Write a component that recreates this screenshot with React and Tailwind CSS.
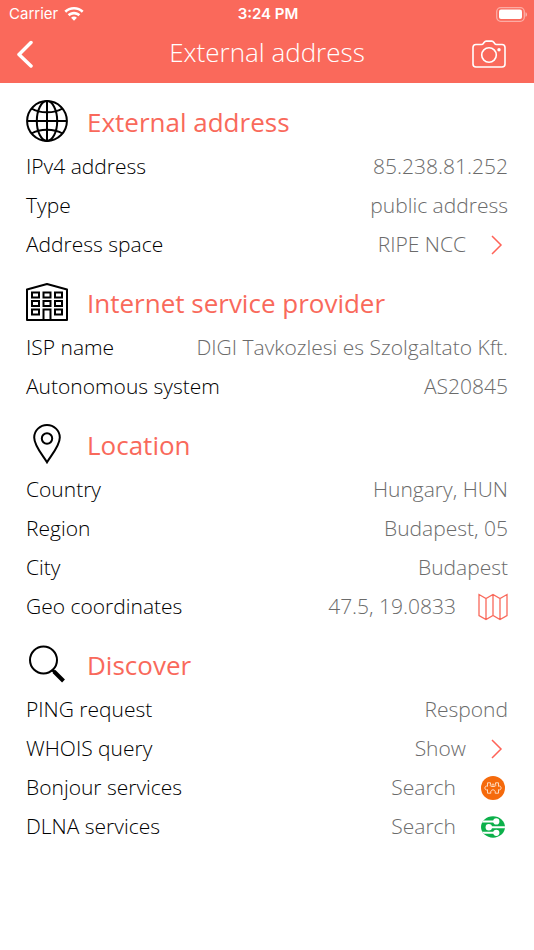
function StatusBar() {
    return (
        <div className="grid grid-cols-3 items-center h-7 pl-[9px] pr-[7px] font-['Inter','Liberation_Sans',sans-serif] text-[15px]">
            <div className="flex items-center gap-1.5">
                <span>Carrier</span>
                <svg className="w-5 h-[14px]" viewBox="0 0 20 14" fill="currentColor">
                    <path d="M10 0C6.300 0 2.900 1.400.400 3.800l1.800 1.900C4.300 3.700 7 2.600 10 2.600s5.700 1.100 7.800 3.100l1.800-1.900C17.100 1.400 13.700 0 10 0z" />
                    <path d="M10 4.800c-2.400 0-4.600.9-6.300 2.500l1.900 1.900C6.800 8.100 8.300 7.400 10 7.400s3.200.7 4.400 1.800l1.900-1.900C14.600 5.700 12.400 4.800 10 4.800z" />
                    <path d="M10 9.600c-1.100 0-2.100.4-2.900 1.100L10 13.800l2.900-3.100c-.8-.7-1.800-1.100-2.900-1.100z" />
                </svg>
            </div>
            <div className="text-center font-semibold whitespace-nowrap">3:24 PM</div>
            <svg className="w-8 h-[15px] justify-self-end" viewBox="0 0 32 15" fill="none">
                <rect x="1.700" y="0.700" width="27.600" height="13.600" rx="4" stroke="white" strokeOpacity="0.450" strokeWidth="1.300" />
                <rect x="4" y="2.500" width="23" height="9.500" rx="2" fill="white" />
                <path d="M30.500 5.200c1 .4 1.500 1.200 1.500 2.300s-.5 1.900-1.500 2.300z" fill="white" fillOpacity="0.500" />
            </svg>
        </div>
    );
}

function GlobeIcon() {
    return (
        <svg className="w-[42px] h-[42px]" viewBox="0 0 42 42" fill="none" stroke="black" strokeWidth="2">
            <circle cx="21" cy="21" r="19.900" />
            <ellipse cx="21" cy="21" rx="10.200" ry="19.900" />
            <path d="M21 1v40M1 21h40" />
            <path d="M5.500 8.500C9.500 11 15 12.300 21 12.300S32.500 11 36.500 8.500M5.500 33.500C9.500 31 15 29.700 21 29.700s11.500 1.300 15.500 3.800" />
        </svg>
    );
}

function BuildingIcon() {
    return (
        <svg className="w-[42px] h-[38px]" viewBox="0 0 42 38" fill="none" stroke="black" strokeWidth="2">
            <path d="M1 37V6.500L21 1l20 5.500V37z" strokeLinejoin="round" />
            <path d="M6 9.500h7v5H6zM17.500 9.500h7v5h-7zM29 9.500h7v5h-7z" />
            <path d="M6 18h7v5H6zM17.500 18h7v5h-7zM29 18h7v5h-7z" />
            <path d="M6 26.500h7v5H6zM29 26.500h7v5h-7zM17.500 37V26.500h7V37" />
        </svg>
    );
}

function PinIcon() {
    return (
        <svg className="w-[28px] h-[40px]" viewBox="0 0 28 40" fill="none" stroke="black" strokeWidth="2">
            <path d="M14 38.300C10 31.500 1.200 22 1.200 13.500 1.200 6.500 7 1 14 1s12.800 5.500 12.800 12.500C26.800 22 18 31.500 14 38.300z" />
            <circle cx="14" cy="14.500" r="5.200" />
        </svg>
    );
}

function SearchIcon() {
    return (
        <svg className="w-[36px] h-[38px]" viewBox="0 0 36 38" fill="none" stroke="black">
            <circle cx="14.500" cy="15" r="13.500" strokeWidth="2" />
            <path d="M23 24.500l3 3" strokeWidth="3" />
            <path d="M25 26.500l9.500 9.500" strokeWidth="4" />
        </svg>
    );
}

function ChevronIcon() {
    return (
        <svg className="w-5 h-5" viewBox="0 0 20 20" fill="none" stroke="#ff6358" strokeWidth="1.500">
            <path d="M4 1l9 9-9 9" />
        </svg>
    );
}

function MapIcon() {
    return (
        <svg className="w-[30px] h-[28px]" viewBox="0 0 30 28" fill="none" stroke="#f9695b" strokeWidth="1.300">
            <path d="M1 1.500l7 4 7-4 7 4 7-4v21l-7 4-7-4-7 4-7-4zM8 5.500v21M15 1.500v21M22 5.500v21" />
        </svg>
    );
}

function BonjourIcon() {
    return (
        <svg className="w-[30px] h-6" viewBox="0 0 30 24" fill="none">
            <circle cx="15" cy="12" r="12" fill="#f56a0c" />
            <path
                d="M9.500 6.800h3v1.400c-.7 1.200 0 2.300 1 2.300h3c1 0 1.700-1.100 1-2.300V6.800h3v3.600c1.400-.9 2.600 0 2.600 1.600s-1.200 2.500-2.600 1.600v3.600h-3.400c.7-1.800-.4-3.400-2.100-3.400s-2.800 1.600-2.100 3.400H9.500v-3.600c-1.400.9-2.600 0-2.600-1.600s1.200-2.500 2.600-1.600z"
                stroke="#ffd9bd"
                strokeWidth="1"
                strokeLinejoin="round"
            />
            <path d="M14 10.500V8.200h2v2.300" stroke="#ffd9bd" strokeWidth="0.900" />
        </svg>
    );
}

function DlnaIcon() {
    return (
        <svg className="w-[30px] h-6" viewBox="0 0 30 24">
            <defs>
                <clipPath id="dlna">
                    <ellipse cx="15" cy="12" rx="12" ry="10.700" />
                </clipPath>
            </defs>
            <g clipPath="url(#dlna)">
                <rect width="30" height="24" fill="#0cb04a" />
                <g fill="none" stroke="white" strokeWidth="1.900">
                    <path d="M2 6.500h15M12 12.300h18M2 17.800h15" />
                </g>
                <g fill="white">
                    <circle cx="18.300" cy="6.400" r="3.100" />
                    <circle cx="10.800" cy="12.200" r="3.200" />
                    <circle cx="18.300" cy="17.800" r="3.100" />
                </g>
            </g>
        </svg>
    );
}

const sections = [
    {
        title: 'External address',
        icon: <GlobeIcon />,
        rows: [
            { label: 'IPv4 address', value: '85.238.81.252' },
            { label: 'Type', value: 'public address' },
            { label: 'Address space', value: 'RIPE NCC', action: <ChevronIcon /> },
        ],
    },
    {
        title: 'Internet service provider',
        icon: <BuildingIcon />,
        rows: [
            { label: 'ISP name', value: 'DIGI Tavkozlesi es Szolgaltato Kft.' },
            { label: 'Autonomous system', value: 'AS20845' },
        ],
    },
    {
        title: 'Location',
        icon: <PinIcon />,
        rows: [
            { label: 'Country', value: 'Hungary, HUN' },
            { label: 'Region', value: 'Budapest, 05' },
            { label: 'City', value: 'Budapest' },
            { label: 'Geo coordinates', value: '47.5, 19.0833', action: <MapIcon /> },
        ],
    },
    {
        title: 'Discover',
        icon: <SearchIcon />,
        rows: [
            { label: 'PING request', value: 'Respond' },
            { label: 'WHOIS query', value: 'Show', action: <ChevronIcon /> },
            { label: 'Bonjour services', value: 'Search', action: <BonjourIcon /> },
            { label: 'DLNA services', value: 'Search', action: <DlnaIcon /> },
        ],
    },
];

function Row({ label, value, action }) {
    return (
        <div className="flex items-center justify-between h-[39px] text-[21px] font-light">
            <dt className="text-black">{label}</dt>
            <dd className="text-[#6b6b6b]">
                {action ? (
                    <button type="button" aria-label={`${label}: ${value}`} className="flex items-center gap-[22px]">
                        {value}
                        {action}
                    </button>
                ) : (
                    value
                )}
            </dd>
        </div>
    );
}

export default function App() {
    return (
        <div className="min-h-screen bg-white font-['Open_Sans','Noto_Sans',sans-serif]">
            <header className="bg-[#fa695b] text-white">
                <StatusBar />
                <div className="grid grid-cols-[1fr_auto_1fr] items-center h-[55px] pb-1 px-4">
                    <button type="button" aria-label="Back" className="justify-self-start">
                        <svg className="w-[18px] h-7" viewBox="0 0 18 28" fill="none" stroke="currentColor" strokeWidth="3.500" strokeLinecap="round" strokeLinejoin="round">
                            <path d="M15 2.500L3 14.500l12 11.500" />
                        </svg>
                    </button>
                    <h1 className="text-[26px] leading-8 pb-1 font-light">External address</h1>
                    <button type="button" aria-label="Take a screenshot" className="justify-self-end pr-3">
                        <svg className="w-[34px] h-7" viewBox="0 0 34 28" fill="none" stroke="currentColor" strokeWidth="1.600">
                            <path d="M4 4.500h5.500c1 0 1.500-.4 2-1.200l.7-1c.5-.8 1-1.200 2-1.200h5.600c1 0 1.500.4 2 1.200l.7 1c.5.8 1 1.200 2 1.200H30c2 0 3 1 3 3V24c0 2-1 3-3 3H4c-2 0-3-1-3-3V7.500c0-2 1-3 3-3z" />
                            <circle cx="17" cy="15" r="7.300" />
                            <circle cx="27" cy="9.700" r="1.700" fill="currentColor" stroke="none" />
                        </svg>
                    </button>
                </div>
            </header>

            <main className="px-[26px]">
                {sections.map((section) => (
                    <section key={section.title} className="pt-3.5">
                        <div className="flex items-center gap-[19px] h-[50px]">
                            <div className="w-[42px] flex justify-center pb-0.5">{section.icon}</div>
                            <h2 className="text-[26px] leading-8 text-[#f9695b]">{section.title}</h2>
                        </div>
                        <dl>
                            {section.rows.map((row) => (
                                <Row key={row.label} {...row} />
                            ))}
                        </dl>
                    </section>
                ))}
            </main>
        </div>
    );
}
